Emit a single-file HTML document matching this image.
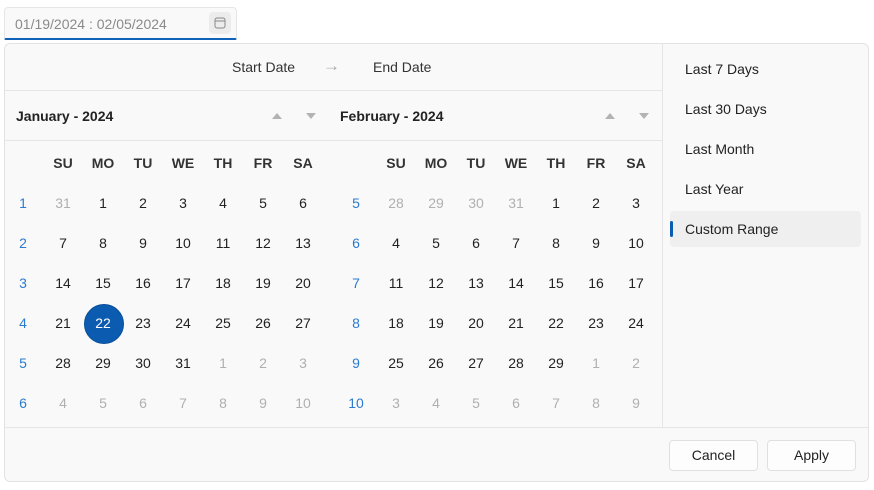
<!DOCTYPE html>
<html><head><style>
*{box-sizing:border-box;margin:0;padding:0}
body{width:874px;height:490px;background:#fff;font-family:"Liberation Sans",sans-serif;font-size:14px;color:#222;position:relative;overflow:hidden}
.abs{position:absolute}
.inp{left:4px;top:7px;width:233px;height:33px;background:#f9f9f9;border:1px solid #e6e6e6;border-bottom:2px solid #0f62b8;border-radius:4px 4px 2px 2px}
.inp span{position:absolute;left:10px;top:8px;color:#8a8a8a;font-size:14px}
.ico{position:absolute;right:5px;top:4px;width:22px;height:22px;background:#ececec;border-radius:4px}
.pop{left:4px;top:43px;width:865px;height:439px;background:#f9f9f9;border:1px solid #e3e3e3;border-radius:6px}
.g{display:grid;grid-template-columns:repeat(8,40px);grid-auto-rows:40px;position:absolute;top:143px}
.g div{display:flex;align-items:center;justify-content:center;color:#222}
.g .h{font-weight:bold;color:#333}
.g .w{color:#2b7bd0}
.g .m{color:#b0b0b0}
.g .s{position:relative;color:#fff}
.g .s:before{content:"";position:absolute;left:1px;top:1px;width:38px;height:38px;border-radius:50%;background:#0b5cb0;border:1px solid #0a4f99}
.g .s span{position:relative}
.mh{font-weight:bold;top:108px;font-size:14px;color:#222}
.tri{width:0;height:0;border-left:5px solid transparent;border-right:5px solid transparent}
.up{border-bottom:6px solid #b3b3b3}
.dn{border-top:6px solid #b3b3b3}
.li{left:685px;color:#222}
.btn{top:440px;height:31px;width:89px;background:#fdfdfd;border:1px solid #e0e0e0;border-radius:4px;text-align:center;line-height:29px;color:#222}
</style></head><body>
<div class="abs inp"><span>01/19/2024 : 02/05/2024</span><div class="ico"><svg width="22" height="22"><rect x="6" y="6" width="10" height="10" rx="2" fill="none" stroke="#888" stroke-width="1"/><line x1="6" y1="9" x2="16" y2="9" stroke="#888"/></svg></div></div>
<div class="abs pop"></div>
<div class="abs" style="left:5px;top:90px;width:657px;height:1px;background:#e5e5e5"></div>
<div class="abs" style="left:5px;top:140px;width:657px;height:1px;background:#e5e5e5"></div>
<div class="abs" style="left:662px;top:44px;width:1px;height:383px;background:#e5e5e5"></div>
<div class="abs" style="left:5px;top:427px;width:863px;height:1px;background:#e5e5e5"></div>
<div class="abs" style="left:232px;top:59px;color:#333">Start Date</div>
<div class="abs" style="left:323px;top:56px;color:#aaa;font-size:17px">→</div>
<div class="abs" style="left:373px;top:59px;color:#333">End Date</div>
<div class="abs mh" style="left:16px">January - 2024</div>
<div class="abs mh" style="left:340px">February - 2024</div>
<div class="abs tri up" style="left:272px;top:113px"></div>
<div class="abs tri dn" style="left:306px;top:113px"></div>
<div class="abs tri up" style="left:605px;top:113px"></div>
<div class="abs tri dn" style="left:639px;top:113px"></div>
<div class="g" style="left:3px">
<div></div><div class="h">SU</div><div class="h">MO</div><div class="h">TU</div><div class="h">WE</div><div class="h">TH</div><div class="h">FR</div><div class="h">SA</div>
<div class="w">1</div><div class="m">31</div><div>1</div><div>2</div><div>3</div><div>4</div><div>5</div><div>6</div>
<div class="w">2</div><div>7</div><div>8</div><div>9</div><div>10</div><div>11</div><div>12</div><div>13</div>
<div class="w">3</div><div>14</div><div>15</div><div>16</div><div>17</div><div>18</div><div>19</div><div>20</div>
<div class="w">4</div><div>21</div><div class="s"><span>22</span></div><div>23</div><div>24</div><div>25</div><div>26</div><div>27</div>
<div class="w">5</div><div>28</div><div>29</div><div>30</div><div>31</div><div class="m">1</div><div class="m">2</div><div class="m">3</div>
<div class="w">6</div><div class="m">4</div><div class="m">5</div><div class="m">6</div><div class="m">7</div><div class="m">8</div><div class="m">9</div><div class="m">10</div>
</div>
<div class="g" style="left:336px">
<div></div><div class="h">SU</div><div class="h">MO</div><div class="h">TU</div><div class="h">WE</div><div class="h">TH</div><div class="h">FR</div><div class="h">SA</div>
<div class="w">5</div><div class="m">28</div><div class="m">29</div><div class="m">30</div><div class="m">31</div><div>1</div><div>2</div><div>3</div>
<div class="w">6</div><div>4</div><div>5</div><div>6</div><div>7</div><div>8</div><div>9</div><div>10</div>
<div class="w">7</div><div>11</div><div>12</div><div>13</div><div>14</div><div>15</div><div>16</div><div>17</div>
<div class="w">8</div><div>18</div><div>19</div><div>20</div><div>21</div><div>22</div><div>23</div><div>24</div>
<div class="w">9</div><div>25</div><div>26</div><div>27</div><div>28</div><div>29</div><div class="m">1</div><div class="m">2</div>
<div class="w">10</div><div class="m">3</div><div class="m">4</div><div class="m">5</div><div class="m">6</div><div class="m">7</div><div class="m">8</div><div class="m">9</div>
</div>
<div class="abs li" style="top:61px">Last 7 Days</div>
<div class="abs li" style="top:101px">Last 30 Days</div>
<div class="abs li" style="top:141px">Last Month</div>
<div class="abs li" style="top:181px">Last Year</div>
<div class="abs" style="left:670px;top:211px;width:191px;height:36px;background:#efefef;border-radius:4px"></div>
<div class="abs" style="left:670px;top:221px;width:3px;height:16px;background:#0b5cb0;border-radius:2px"></div>
<div class="abs li" style="top:221px">Custom Range</div>
<div class="abs btn" style="left:669px">Cancel</div>
<div class="abs btn" style="left:767px">Apply</div>
</body></html>
